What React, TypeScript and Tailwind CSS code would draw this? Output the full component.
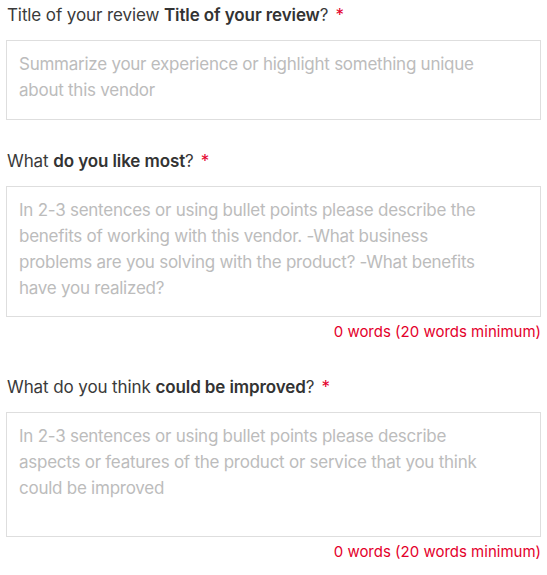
import React, { useState } from "react";

const font = { fontFamily: "Inter, 'Open Sans', Arial, sans-serif" };

interface FieldProps {
  lead: string;
  bold: string;
  placeholder: string;
  height: string;
  counter?: boolean;
}

function Field({ lead, bold, placeholder, height, counter }: FieldProps) {
  const [value, setValue] = useState("");
  const words = value.trim() === "" ? 0 : value.trim().split(/\s+/).length;

  return (
    <div className="flex flex-col">
      <label className="text-[17px] leading-[24px] text-[#3a3a3a] pl-[7px] tracking-[-0.1px]">
        {lead}
        <span className="font-semibold text-[#333]">{bold}</span>?
        <span className="text-[#e4002b] ml-[7px]">*</span>
      </label>
      <textarea
        value={value}
        onChange={(e) => setValue(e.target.value)}
        placeholder={placeholder}
        className={`mt-[13px] ml-[6px] w-[535px] ${height} resize-none border border-[#dedede] bg-white pl-[12px] pr-[48px] pt-[10px] text-[17px] leading-[26px] text-[#333] tracking-[-0.25px] placeholder:text-[#bcbcbc] focus:outline-none`}
      />
      {counter && (
        <div className="mt-[5px] w-[541px] text-right text-[15px] leading-[20px] text-[#e4002b]">
          {words} words (20 words minimum)
        </div>
      )}
    </div>
  );
}

export default function App() {
  return (
    <div className="bg-white w-[547px] h-[575px]" style={font}>
      <div className="flex flex-col pt-[3px]">
        <Field
          lead="Title of your review "
          bold="Title of your review"
          placeholder="Summarize your experience or highlight something unique about this vendor"
          height="h-[80px]"
        />
        <div className="mt-[29px]">
          <Field
            lead="What "
            bold="do you like most"
            placeholder="In 2-3 sentences or using bullet points please describe the benefits of working with this vendor. -What business problems are you solving with the product? -What benefits have you realized?"
            height="h-[131px]"
            counter
          />
        </div>
        <div className="mt-[33px]">
          <Field
            lead="What do you think "
            bold="could be improved"
            placeholder="In 2-3 sentences or using bullet points please describe aspects or features of the product or service that you think could be improved"
            height="h-[125px]"
            counter
          />
        </div>
      </div>
    </div>
  );
}
